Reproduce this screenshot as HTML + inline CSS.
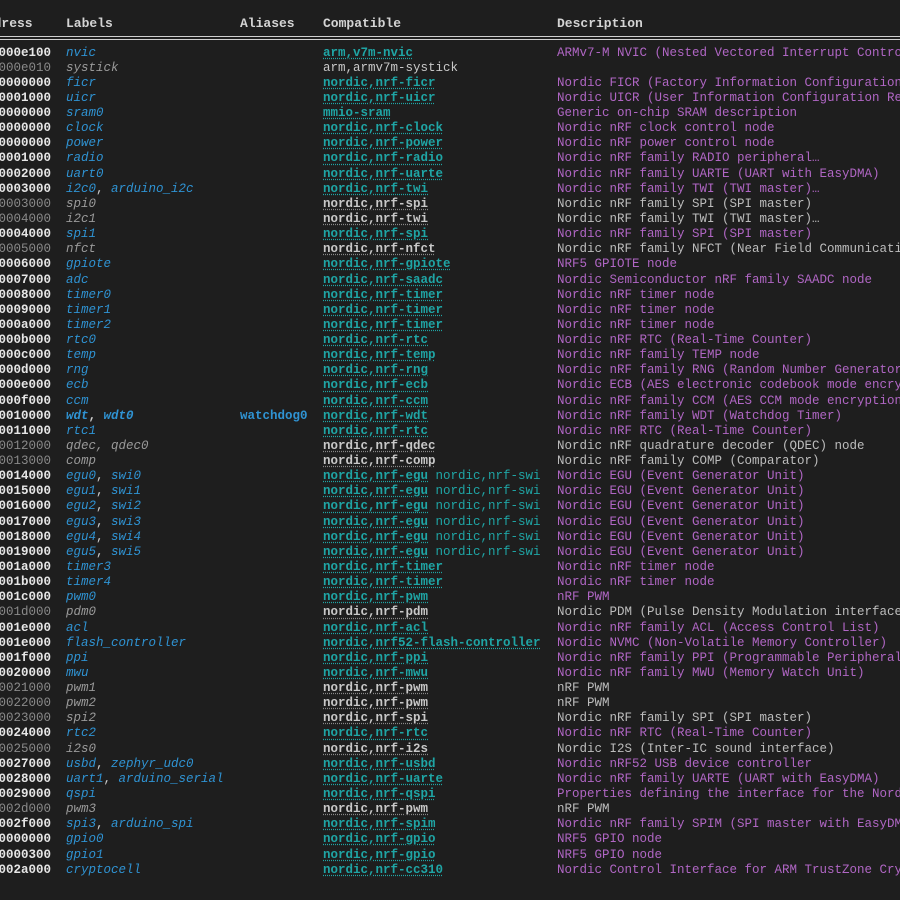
<!DOCTYPE html>
<html><head><meta charset="utf-8"><style>
html,body{margin:0;padding:0;background:#1e1e1e;width:900px;height:900px;overflow:hidden}
body{position:relative;font-family:"Liberation Mono","DejaVu Sans Mono",monospace;font-size:12.5px;color:#ccc}
.h{position:absolute;top:16px;font-weight:bold;color:#d4d4d4;white-space:pre;font-size:13px}
.line{position:absolute;left:0;width:900px;height:1px;background:#cfcfcf}
.r{position:absolute;left:0;width:900px;height:15px;line-height:15px;white-space:pre;overflow:hidden}
.r span{position:absolute;top:0}
.a{right:849px;text-align:right;font-weight:bold;color:#e6e6e6}
.l{left:66px;font-style:italic;color:#2f93d3}
.al{left:240px;font-weight:bold;color:#2f93d3}
.c{left:323px;color:#1fa5a5}
.c b{text-decoration:underline dotted #1fa5a5;text-underline-offset:2px}
.d{left:557px;color:#b066c4}
.x .a{color:#8a8a8a;font-weight:normal}
.x .l{color:#9a9a9a}
.x .c{color:#c8c8c8}
.x .c b{text-decoration-color:#888}
.x .d{color:#bdbdbd}
</style></head><body>
<div class="h" style="left:-22px">Address</div>
<div class="h" style="left:66px">Labels</div>
<div class="h" style="left:240px">Aliases</div>
<div class="h" style="left:323px">Compatible</div>
<div class="h" style="left:557px">Description</div>
<div class="line" style="top:36px"></div>
<div class="line" style="top:39px"></div>

<div class="r" style="top:45.5px"><span class="a">0xe000e100</span><span class="l">nvic</span><span class="c"><b>arm,v7m-nvic</b></span><span class="d">ARMv7-M NVIC (Nested Vectored Interrupt Controller)</span></div>
<div class="r x" style="top:60.6px"><span class="a">0xe000e010</span><span class="l">systick</span><span class="c" style="font-weight:normal">arm,armv7m-systick</span></div>
<div class="r" style="top:75.8px"><span class="a">0x10000000</span><span class="l">ficr</span><span class="c"><b>nordic,nrf-ficr</b></span><span class="d">Nordic FICR (Factory Information Configuration Registers)</span></div>
<div class="r" style="top:90.9px"><span class="a">0x10001000</span><span class="l">uicr</span><span class="c"><b>nordic,nrf-uicr</b></span><span class="d">Nordic UICR (User Information Configuration Registers)</span></div>
<div class="r" style="top:106px"><span class="a">0x20000000</span><span class="l">sram0</span><span class="c"><b>mmio-sram</b></span><span class="d">Generic on-chip SRAM description</span></div>
<div class="r" style="top:121.2px"><span class="a">0x40000000</span><span class="l">clock</span><span class="c"><b>nordic,nrf-clock</b></span><span class="d">Nordic nRF clock control node</span></div>
<div class="r" style="top:136.3px"><span class="a">0x40000000</span><span class="l">power</span><span class="c"><b>nordic,nrf-power</b></span><span class="d">Nordic nRF power control node</span></div>
<div class="r" style="top:151.4px"><span class="a">0x40001000</span><span class="l">radio</span><span class="c"><b>nordic,nrf-radio</b></span><span class="d">Nordic nRF family RADIO peripheral…</span></div>
<div class="r" style="top:166.5px"><span class="a">0x40002000</span><span class="l">uart0</span><span class="c"><b>nordic,nrf-uarte</b></span><span class="d">Nordic nRF family UARTE (UART with EasyDMA)</span></div>
<div class="r" style="top:181.7px"><span class="a">0x40003000</span><span class="l">i2c0<span style="position:static;font-style:normal;color:#ccc">, </span>arduino_i2c</span><span class="c"><b>nordic,nrf-twi</b></span><span class="d">Nordic nRF family TWI (TWI master)…</span></div>
<div class="r x" style="top:196.8px"><span class="a">0x40003000</span><span class="l">spi0</span><span class="c"><b>nordic,nrf-spi</b></span><span class="d">Nordic nRF family SPI (SPI master)</span></div>
<div class="r x" style="top:211.9px"><span class="a">0x40004000</span><span class="l">i2c1</span><span class="c"><b>nordic,nrf-twi</b></span><span class="d">Nordic nRF family TWI (TWI master)…</span></div>
<div class="r" style="top:227.1px"><span class="a">0x40004000</span><span class="l">spi1</span><span class="c"><b>nordic,nrf-spi</b></span><span class="d">Nordic nRF family SPI (SPI master)</span></div>
<div class="r x" style="top:242.2px"><span class="a">0x40005000</span><span class="l">nfct</span><span class="c"><b>nordic,nrf-nfct</b></span><span class="d">Nordic nRF family NFCT (Near Field Communication Tag)</span></div>
<div class="r" style="top:257.3px"><span class="a">0x40006000</span><span class="l">gpiote</span><span class="c"><b>nordic,nrf-gpiote</b></span><span class="d">NRF5 GPIOTE node</span></div>
<div class="r" style="top:272.5px"><span class="a">0x40007000</span><span class="l">adc</span><span class="c"><b>nordic,nrf-saadc</b></span><span class="d">Nordic Semiconductor nRF family SAADC node</span></div>
<div class="r" style="top:287.6px"><span class="a">0x40008000</span><span class="l">timer0</span><span class="c"><b>nordic,nrf-timer</b></span><span class="d">Nordic nRF timer node</span></div>
<div class="r" style="top:302.7px"><span class="a">0x40009000</span><span class="l">timer1</span><span class="c"><b>nordic,nrf-timer</b></span><span class="d">Nordic nRF timer node</span></div>
<div class="r" style="top:317.9px"><span class="a">0x4000a000</span><span class="l">timer2</span><span class="c"><b>nordic,nrf-timer</b></span><span class="d">Nordic nRF timer node</span></div>
<div class="r" style="top:333px"><span class="a">0x4000b000</span><span class="l">rtc0</span><span class="c"><b>nordic,nrf-rtc</b></span><span class="d">Nordic nRF RTC (Real-Time Counter)</span></div>
<div class="r" style="top:348.1px"><span class="a">0x4000c000</span><span class="l">temp</span><span class="c"><b>nordic,nrf-temp</b></span><span class="d">Nordic nRF family TEMP node</span></div>
<div class="r" style="top:363.3px"><span class="a">0x4000d000</span><span class="l">rng</span><span class="c"><b>nordic,nrf-rng</b></span><span class="d">Nordic nRF family RNG (Random Number Generator)</span></div>
<div class="r" style="top:378.4px"><span class="a">0x4000e000</span><span class="l">ecb</span><span class="c"><b>nordic,nrf-ecb</b></span><span class="d">Nordic ECB (AES electronic codebook mode encryption)</span></div>
<div class="r" style="top:393.5px"><span class="a">0x4000f000</span><span class="l">ccm</span><span class="c"><b>nordic,nrf-ccm</b></span><span class="d">Nordic nRF family CCM (AES CCM mode encryption)</span></div>
<div class="r" style="top:408.6px"><span class="a">0x40010000</span><span class="l" style="font-weight:bold">wdt<span style="position:static;font-style:normal;color:#ccc">, </span>wdt0</span><span class="al">watchdog0</span><span class="c"><b>nordic,nrf-wdt</b></span><span class="d">Nordic nRF family WDT (Watchdog Timer)</span></div>
<div class="r" style="top:423.8px"><span class="a">0x40011000</span><span class="l">rtc1</span><span class="c"><b>nordic,nrf-rtc</b></span><span class="d">Nordic nRF RTC (Real-Time Counter)</span></div>
<div class="r x" style="top:438.9px"><span class="a">0x40012000</span><span class="l">qdec, qdec0</span><span class="c"><b>nordic,nrf-qdec</b></span><span class="d">Nordic nRF quadrature decoder (QDEC) node</span></div>
<div class="r x" style="top:454px"><span class="a">0x40013000</span><span class="l">comp</span><span class="c"><b>nordic,nrf-comp</b></span><span class="d">Nordic nRF family COMP (Comparator)</span></div>
<div class="r" style="top:469.2px"><span class="a">0x40014000</span><span class="l">egu0<span style="position:static;font-style:normal;color:#ccc">, </span>swi0</span><span class="c"><b>nordic,nrf-egu</b> nordic,nrf-swi</span><span class="d">Nordic EGU (Event Generator Unit)</span></div>
<div class="r" style="top:484.3px"><span class="a">0x40015000</span><span class="l">egu1<span style="position:static;font-style:normal;color:#ccc">, </span>swi1</span><span class="c"><b>nordic,nrf-egu</b> nordic,nrf-swi</span><span class="d">Nordic EGU (Event Generator Unit)</span></div>
<div class="r" style="top:499.4px"><span class="a">0x40016000</span><span class="l">egu2<span style="position:static;font-style:normal;color:#ccc">, </span>swi2</span><span class="c"><b>nordic,nrf-egu</b> nordic,nrf-swi</span><span class="d">Nordic EGU (Event Generator Unit)</span></div>
<div class="r" style="top:514.6px"><span class="a">0x40017000</span><span class="l">egu3<span style="position:static;font-style:normal;color:#ccc">, </span>swi3</span><span class="c"><b>nordic,nrf-egu</b> nordic,nrf-swi</span><span class="d">Nordic EGU (Event Generator Unit)</span></div>
<div class="r" style="top:529.7px"><span class="a">0x40018000</span><span class="l">egu4<span style="position:static;font-style:normal;color:#ccc">, </span>swi4</span><span class="c"><b>nordic,nrf-egu</b> nordic,nrf-swi</span><span class="d">Nordic EGU (Event Generator Unit)</span></div>
<div class="r" style="top:544.8px"><span class="a">0x40019000</span><span class="l">egu5<span style="position:static;font-style:normal;color:#ccc">, </span>swi5</span><span class="c"><b>nordic,nrf-egu</b> nordic,nrf-swi</span><span class="d">Nordic EGU (Event Generator Unit)</span></div>
<div class="r" style="top:560px"><span class="a">0x4001a000</span><span class="l">timer3</span><span class="c"><b>nordic,nrf-timer</b></span><span class="d">Nordic nRF timer node</span></div>
<div class="r" style="top:575.1px"><span class="a">0x4001b000</span><span class="l">timer4</span><span class="c"><b>nordic,nrf-timer</b></span><span class="d">Nordic nRF timer node</span></div>
<div class="r" style="top:590.2px"><span class="a">0x4001c000</span><span class="l">pwm0</span><span class="c"><b>nordic,nrf-pwm</b></span><span class="d">nRF PWM</span></div>
<div class="r x" style="top:605.4px"><span class="a">0x4001d000</span><span class="l">pdm0</span><span class="c"><b>nordic,nrf-pdm</b></span><span class="d">Nordic PDM (Pulse Density Modulation interface)</span></div>
<div class="r" style="top:620.5px"><span class="a">0x4001e000</span><span class="l">acl</span><span class="c"><b>nordic,nrf-acl</b></span><span class="d">Nordic nRF family ACL (Access Control List)</span></div>
<div class="r" style="top:635.6px"><span class="a">0x4001e000</span><span class="l">flash_controller</span><span class="c"><b>nordic,nrf52-flash-controller</b></span><span class="d">Nordic NVMC (Non-Volatile Memory Controller)</span></div>
<div class="r" style="top:650.7px"><span class="a">0x4001f000</span><span class="l">ppi</span><span class="c"><b>nordic,nrf-ppi</b></span><span class="d">Nordic nRF family PPI (Programmable Peripheral Interconnect)</span></div>
<div class="r" style="top:665.9px"><span class="a">0x40020000</span><span class="l">mwu</span><span class="c"><b>nordic,nrf-mwu</b></span><span class="d">Nordic nRF family MWU (Memory Watch Unit)</span></div>
<div class="r x" style="top:681px"><span class="a">0x40021000</span><span class="l">pwm1</span><span class="c"><b>nordic,nrf-pwm</b></span><span class="d">nRF PWM</span></div>
<div class="r x" style="top:696.1px"><span class="a">0x40022000</span><span class="l">pwm2</span><span class="c"><b>nordic,nrf-pwm</b></span><span class="d">nRF PWM</span></div>
<div class="r x" style="top:711.3px"><span class="a">0x40023000</span><span class="l">spi2</span><span class="c"><b>nordic,nrf-spi</b></span><span class="d">Nordic nRF family SPI (SPI master)</span></div>
<div class="r" style="top:726.4px"><span class="a">0x40024000</span><span class="l">rtc2</span><span class="c"><b>nordic,nrf-rtc</b></span><span class="d">Nordic nRF RTC (Real-Time Counter)</span></div>
<div class="r x" style="top:741.5px"><span class="a">0x40025000</span><span class="l">i2s0</span><span class="c"><b>nordic,nrf-i2s</b></span><span class="d">Nordic I2S (Inter-IC sound interface)</span></div>
<div class="r" style="top:756.7px"><span class="a">0x40027000</span><span class="l">usbd<span style="position:static;font-style:normal;color:#ccc">, </span>zephyr_udc0</span><span class="c"><b>nordic,nrf-usbd</b></span><span class="d">Nordic nRF52 USB device controller</span></div>
<div class="r" style="top:771.8px"><span class="a">0x40028000</span><span class="l">uart1<span style="position:static;font-style:normal;color:#ccc">, </span>arduino_serial</span><span class="c"><b>nordic,nrf-uarte</b></span><span class="d">Nordic nRF family UARTE (UART with EasyDMA)</span></div>
<div class="r" style="top:786.9px"><span class="a">0x40029000</span><span class="l">qspi</span><span class="c"><b>nordic,nrf-qspi</b></span><span class="d">Properties defining the interface for the Nordic QSPI peripheral</span></div>
<div class="r x" style="top:802.1px"><span class="a">0x4002d000</span><span class="l">pwm3</span><span class="c"><b>nordic,nrf-pwm</b></span><span class="d">nRF PWM</span></div>
<div class="r" style="top:817.2px"><span class="a">0x4002f000</span><span class="l">spi3<span style="position:static;font-style:normal;color:#ccc">, </span>arduino_spi</span><span class="c"><b>nordic,nrf-spim</b></span><span class="d">Nordic nRF family SPIM (SPI master with EasyDMA)</span></div>
<div class="r" style="top:832.3px"><span class="a">0x50000000</span><span class="l">gpio0</span><span class="c"><b>nordic,nrf-gpio</b></span><span class="d">NRF5 GPIO node</span></div>
<div class="r" style="top:847.5px"><span class="a">0x50000300</span><span class="l">gpio1</span><span class="c"><b>nordic,nrf-gpio</b></span><span class="d">NRF5 GPIO node</span></div>
<div class="r" style="top:862.6px"><span class="a">0x5002a000</span><span class="l">cryptocell</span><span class="c"><b>nordic,nrf-cc310</b></span><span class="d">Nordic Control Interface for ARM TrustZone CryptoCell 310</span></div>
</body></html>
